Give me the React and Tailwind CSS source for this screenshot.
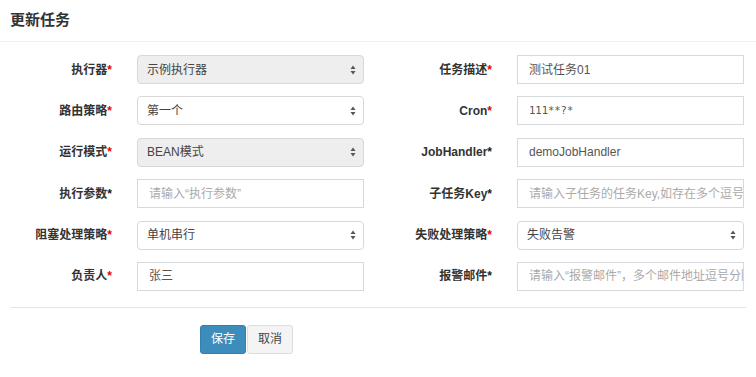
import React from 'react';

const font = { fontFamily: '"Liberation Sans", "Noto Sans CJK SC", sans-serif' };

const Arrows = () => (
  <svg width="6" height="10" viewBox="0 0 6 10" className="absolute right-[7px] top-1/2 -translate-y-1/2">
    <path d="M3 0.5 L5.5 4 L0.5 4 Z" fill="#555" />
    <path d="M3 9.5 L5.5 6 L0.5 6 Z" fill="#555" />
  </svg>
);

const Label = ({ text, red = true, wide }) => (
  <label className={`${wide ? 'w-[114px]' : 'w-[112px]'} shrink-0 text-right text-[12px] font-bold text-[#333]`}>
    {text}
    <span className={red ? 'text-[#e00]' : 'text-[#222]'}>*</span>
  </label>
);

const Select = ({ value, disabled }) => (
  <div
    className={`relative ml-[25px] flex h-[29px] w-[227px] items-center rounded-[4px] border border-[#d8d8d8] px-[9px] text-[12px] text-[#444] ${
      disabled ? 'bg-[#eeeeee]' : 'bg-white'
    }`}
  >
    {value}
    <Arrows />
  </div>
);

const Input = ({ value, placeholder, mono }) => (
  <div
    className="ml-[25px] flex h-[29px] w-[227px] items-center overflow-hidden whitespace-nowrap border border-[#d6d9de] bg-white px-[11px] text-[12px] text-[#555]"
    style={mono ? { fontFamily: '"DejaVu Sans Mono", monospace', fontSize: '10.5px' } : undefined}
  >
    {value ? value : <span className="text-[#aaa]">{placeholder}</span>}
  </div>
);

const rows = [
  [
    { label: '执行器', el: <Select value="示例执行器" disabled /> },
    { label: '任务描述', el: <Input value="测试任务01" /> },
  ],
  [
    { label: '路由策略', el: <Select value="第一个" /> },
    { label: 'Cron', el: <Input value="111**?*" mono /> },
  ],
  [
    { label: '运行模式', el: <Select value="BEAN模式" disabled /> },
    { label: 'JobHandler', red: false, el: <Input value="demoJobHandler" /> },
  ],
  [
    { label: '执行参数', red: false, el: <Input placeholder="请输入“执行参数”" /> },
    { label: '子任务Key', red: false, el: <Input placeholder="请输入子任务的任务Key,如存在多个逗号分隔" /> },
  ],
  [
    { label: '阻塞处理策略', el: <Select value="单机串行" /> },
    { label: '失败处理策略', el: <Select value="失败告警" /> },
  ],
  [
    { label: '负责人', el: <Input value="张三" /> },
    { label: '报警邮件', red: false, el: <Input placeholder="请输入“报警邮件”，多个邮件地址逗号分隔" /> },
  ],
];

export default function App() {
  return (
    <div className="h-[377px] w-[756px] bg-white" style={font}>
      <div className="flex h-[42px] items-center border-b border-[#f2f2f2] px-[10px]">
        <h4 className="text-[15px] font-bold text-[#333]">更新任务</h4>
      </div>
      <div className="grid grid-cols-[378px_378px] gap-y-[12.4px] pt-[13px]">
        {rows.map((row, i) => (
          <React.Fragment key={i}>
            <div className="flex h-[29px] items-center">
              <Label text={row[0].label} red={row[0].red !== false} />
              {row[0].el}
            </div>
            <div className="flex h-[29px] items-center">
              <Label text={row[1].label} red={row[1].red !== false} wide />
              {row[1].el}
            </div>
          </React.Fragment>
        ))}
      </div>
      <div className="mx-[10px] mt-[16px] border-t border-[#e6e6e6]" />
      <div className="flex pl-[200px] pt-[17px]">
        <button className="h-[29px] w-[46px] rounded-[3px] border border-[#367fa9] bg-[#3c8dbc] text-[12px] text-white">
          保存
        </button>
        <button className="ml-[1px] h-[29px] w-[46px] rounded-[3px] border border-[#ddd] bg-[#f4f4f4] text-[12px] text-[#444]">
          取消
        </button>
      </div>
    </div>
  );
}
